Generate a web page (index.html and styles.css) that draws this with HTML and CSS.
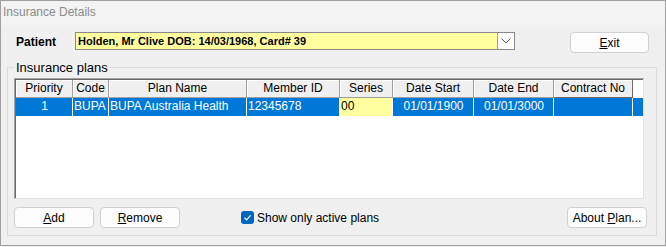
FILE: index.html
```html
<!DOCTYPE html>
<html lang="en">
<head>
  <meta charset="UTF-8">
  <title>Insurance Details</title>
  <link rel="stylesheet" href="styles.css">
</head>
<body>
  <div class="window">
    <div class="title-bar">Insurance Details</div>

    <div class="patient-row">
      <label class="patient-label">Patient</label>
      <div class="combo">
        <span class="combo-text">Holden, Mr Clive DOB: 14/03/1968, Card# 39</span>
        <span class="combo-btn">
          <svg viewBox="0 0 10 6" width="10" height="6">
            <path d="M0.5 0.5L5 5L9.5 0.5" fill="none" stroke="#5a5a5a" stroke-width="1"/>
          </svg>
        </span>
      </div>
      <button class="btn btn-exit"><u>E</u>xit</button>
    </div>

    <fieldset class="plans">
      <legend>Insurance plans</legend>

      <div class="grid">
        <div class="hcell">Priority</div>
        <div class="hcell">Code</div>
        <div class="hcell">Plan Name</div>
        <div class="hcell">Member ID</div>
        <div class="hcell">Series</div>
        <div class="hcell">Date Start</div>
        <div class="hcell">Date End</div>
        <div class="hcell last">Contract No</div>
        <div class="hcell filler"></div>

        <div class="cell center">1</div>
        <div class="cell">BUPA</div>
        <div class="cell">BUPA Australia Health</div>
        <div class="cell">12345678</div>
        <div class="cell edit">00</div>
        <div class="cell center">01/01/1900</div>
        <div class="cell center">01/01/3000</div>
        <div class="cell"></div>
        <div class="cell filler"></div>
      </div>

      <div class="actions">
        <button class="btn"><u>A</u>dd</button>
        <button class="btn"><u>R</u>emove</button>
        <label class="check">
          <span class="check-box">
            <svg viewBox="0 0 13 13" width="13" height="13">
              <path d="M3.5 6.8L5.6 8.8L9.6 4.4" fill="none" stroke="#fff" stroke-width="1.2"/>
            </svg>
          </span>
          Show only active plans
        </label>
        <button class="btn btn-about">About <u>P</u>lan...</button>
      </div>
    </fieldset>
  </div>
</body>
</html>
```

FILE: styles.css
```css
* {
  margin: 0;
  padding: 0;
  box-sizing: border-box;
}

body {
  background-color: #f0f0f0;
  font-family: "Liberation Sans", Arial, sans-serif;
  font-size: 12px;
  color: #000;
}

.window {
  width: 666px;
  height: 246px;
  border: 1px solid #a0a0a0;
  background-color: #f0f0f0;
  display: flex;
  flex-direction: column;
}

.title-bar {
  height: 24px;
  line-height: 23px;
  padding-left: 2px;
  background-color: #f3f3f3;
  color: #8c8c8c;
  font-size: 12px;
}

/* patient row */
.patient-row {
  display: flex;
  align-items: flex-start;
  margin-top: 7px;
  padding-left: 15px;
}

.patient-label {
  width: 59px;
  font-weight: bold;
  font-size: 12px;
  line-height: 18px;
  margin-top: 1px;
}

.combo {
  width: 440px;
  height: 18px;
  display: flex;
  border: 1px solid #8a8a8a;
  background-color: #ffffa0;
}

.combo-text {
  flex: 1;
  font-weight: bold;
  font-size: 11px;
  line-height: 16px;
  padding-left: 2px;
}

.combo-btn {
  width: 17px;
  background-color: #fff;
  border-left: 1px solid #a0a0a0;
  display: flex;
  align-items: center;
  justify-content: center;
}

.btn {
  font-family: inherit;
  font-size: 12px;
  height: 21px;
  width: 80px;
  background-color: #fdfdfd;
  border: 1px solid #d0d0d0;
  border-radius: 4px;
  color: #000;
}

.btn u {
  text-underline-offset: 1px;
}

.btn-exit {
  margin-left: 55px;
  width: 79px;
}

/* group box */
.plans {
  margin: 7px 8px 9px 6px;
  border: 1px solid #dcdcdc;
  padding: 0 9px 6px 6px;
  flex: 1;
  display: flex;
  flex-direction: column;
}

.plans legend {
  font-size: 13px;
  margin-left: 0;
  padding: 0 2px;
  line-height: 15px;
}

.grid {
  margin-top: 3px;
  margin-right: 3px;
  height: 121px;
  display: grid;
  grid-template-columns: 57px 36px 138px 93px 53px 81px 80px 79px 1fr;
  grid-template-rows: 18px 18px;
  align-content: start;
  background-color: #fff;
  border-top: 1px solid #a0a0a0;
  border-left: 1px solid #a0a0a0;
  border-right: 1px solid #e3e3e3;
  border-bottom: 1px solid #e3e3e3;
  box-shadow: inset 1px 1px 0 #696969;
  padding: 1px 0 0 1px;
}

.hcell {
  background-color: #f0f0f0;
  text-align: center;
  line-height: 17px;
  border-right: 1px solid #a0a0a0;
  border-bottom: 1px solid #a0a0a0;
  box-shadow: inset 1px 1px 0 #fff;
  white-space: nowrap;
  overflow: hidden;
}

.hcell.last {
  border-right-color: #696969;
  border-bottom-color: #696969;
}

.hcell.filler {
  background-color: #fff;
  border: none;
  box-shadow: none;
}

.cell {
  background-color: #0078d7;
  color: #fff;
  line-height: 17px;
  padding-left: 1px;
  border-right: 1px solid #fff;
  white-space: nowrap;
  overflow: hidden;
}

.cell.center {
  text-align: center;
}

.cell.edit {
  background-color: #ffffa0;
  color: #000;
}

.cell.filler {
  border-right: none;
}

/* bottom buttons */
.actions {
  display: flex;
  align-items: center;
  margin-top: 8px;
}

.actions .btn + .btn {
  margin-left: 6px;
}

.check {
  display: flex;
  align-items: center;
  margin-left: 61px;
  gap: 3px;
}

.check-box {
  width: 13px;
  height: 13px;
  border-radius: 3px;
  background-color: #0067c0;
  display: flex;
}

.btn-about {
  margin-left: auto;
}
```
